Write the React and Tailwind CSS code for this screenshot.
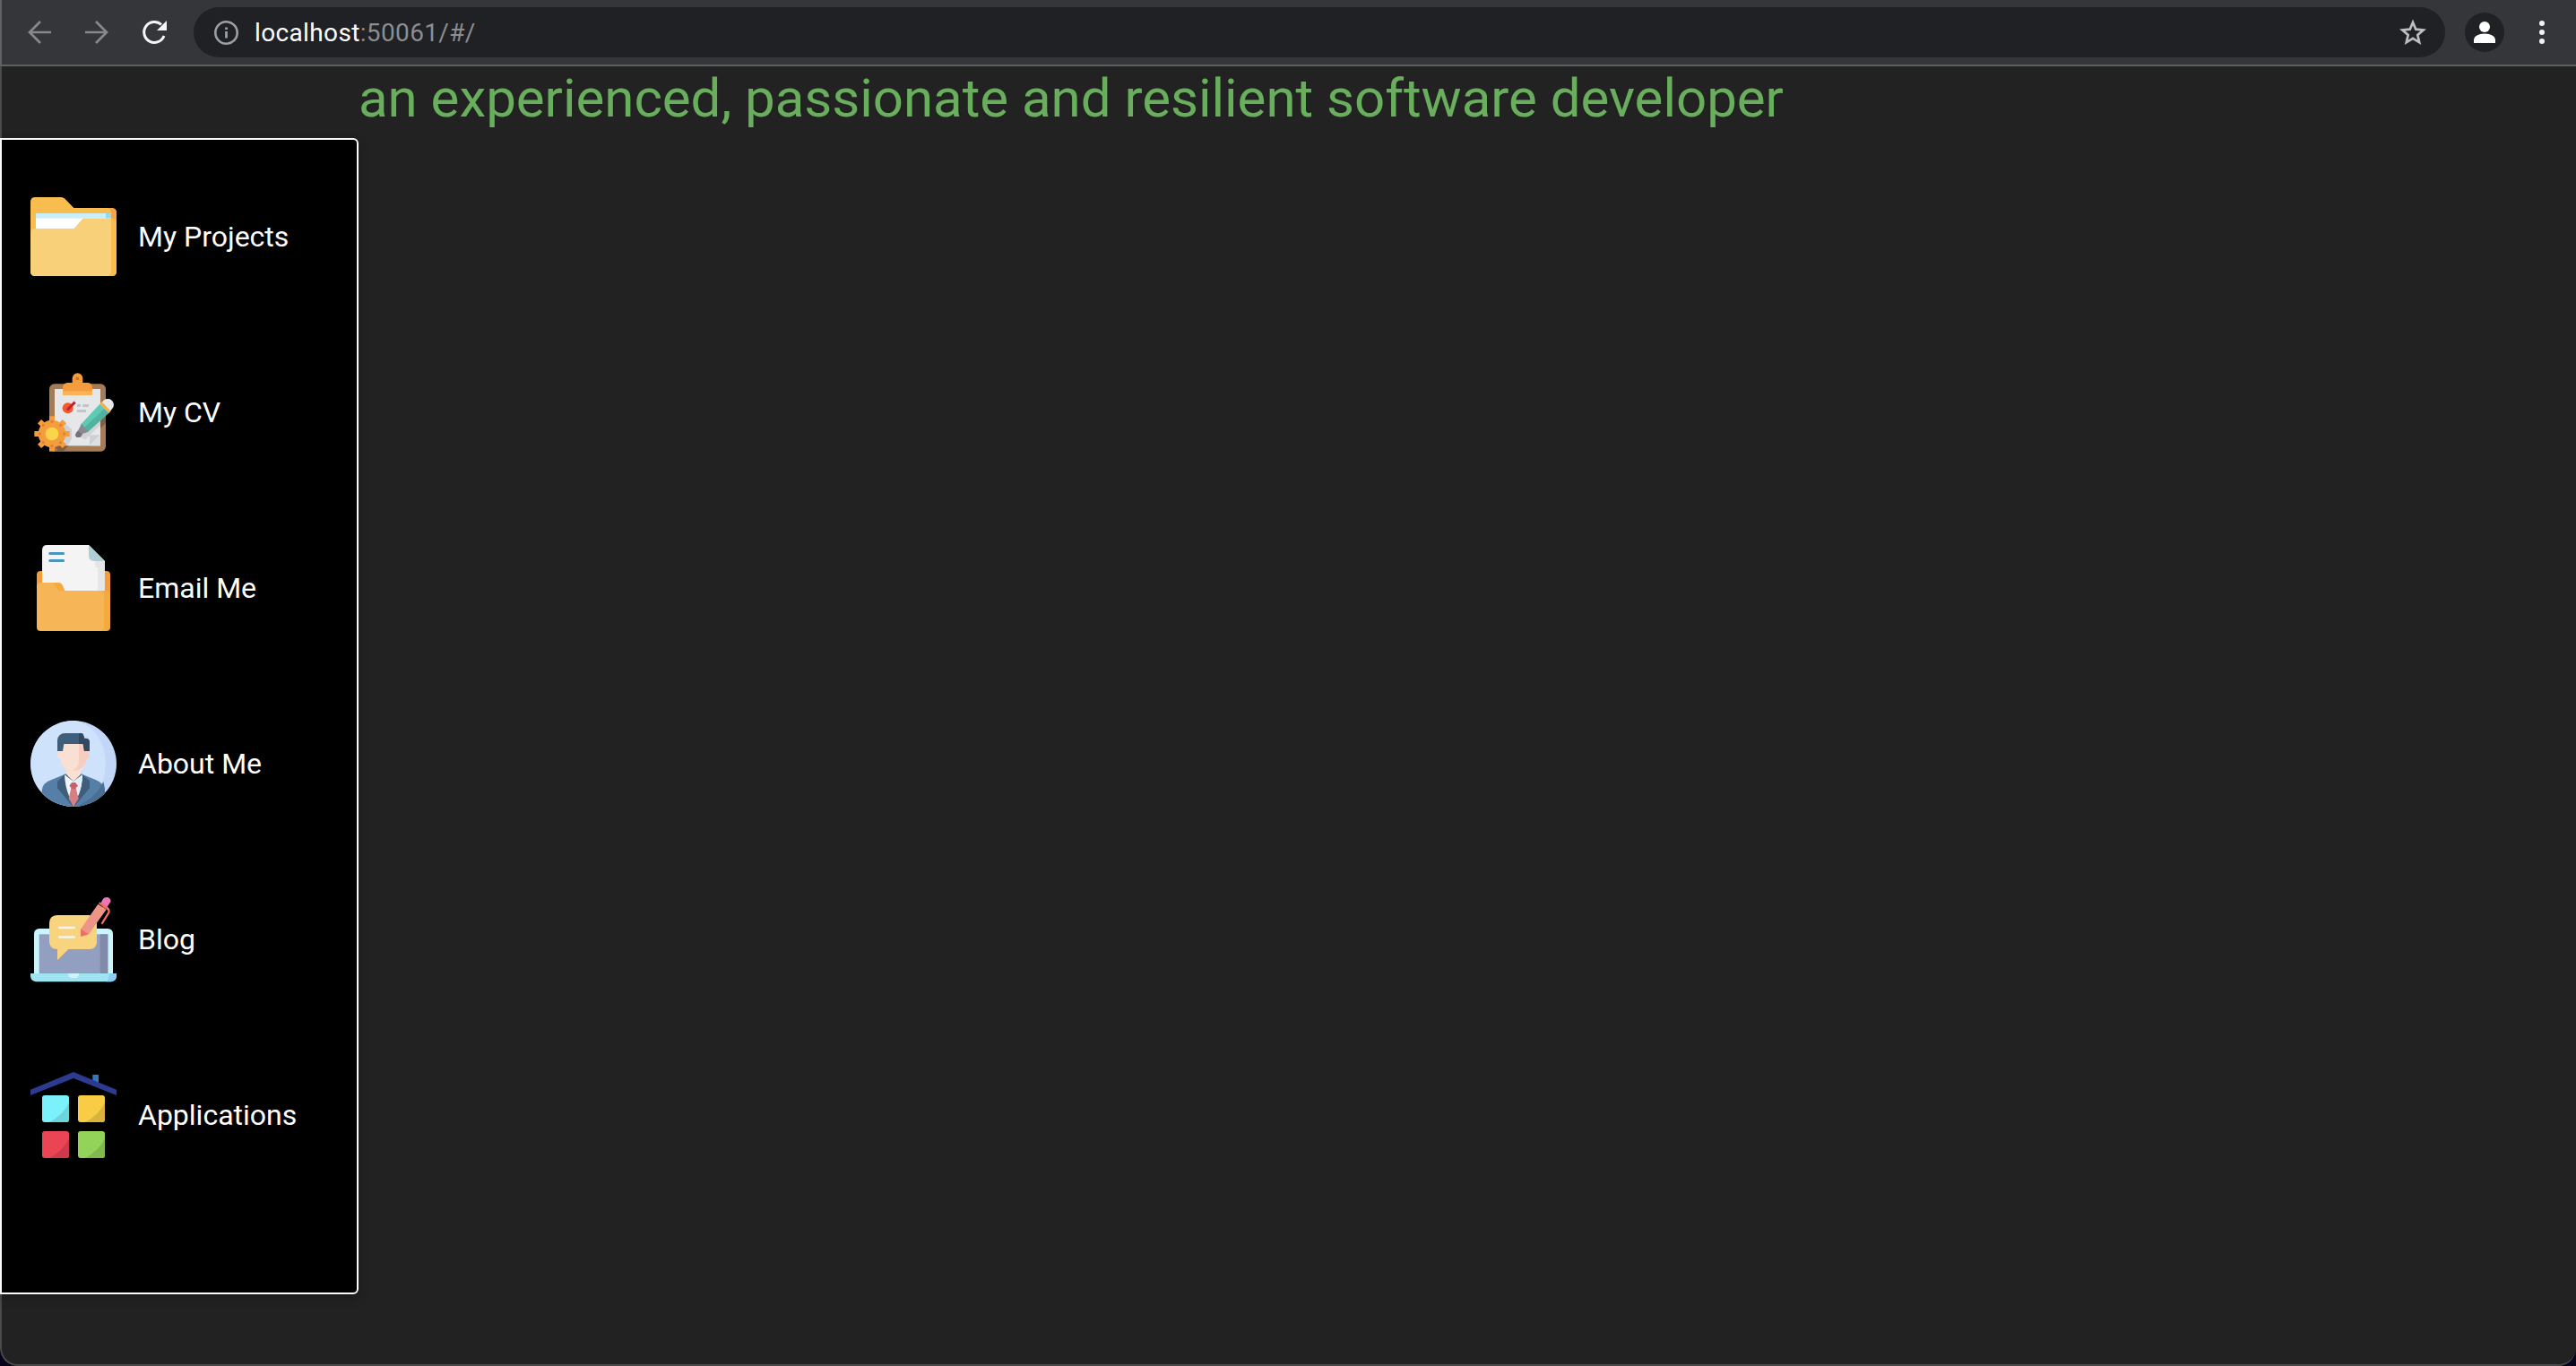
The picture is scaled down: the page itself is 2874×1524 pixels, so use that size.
import React from "react";

const FolderIcon = () => (
  <svg viewBox="42 48 288 288" className="size-24 shrink-0">
    <path d="M58 60H144Q152 60 158 66L187 96H314Q330 97 330 113V308Q330 324 314 324H58Q42 324 42 308V76Q42 60 58 60Z" fill="#f7bd4f" />
    <path d="M296 96H314Q330 97 330 113V140L312 132V112Q312 97 296 96Z" fill="#f6a34c" />
    <rect x="60" y="114" width="252" height="52" fill="#fff" />
    <rect x="60" y="114" width="234" height="17" fill="#c9effb" />
    <rect x="294" y="114" width="18" height="17" fill="#93dcf5" />
    <path d="M221 131H312V324H58Q42 324 42 308V181Q42 165 58 165H188L212 137Q216 131 221 131Z" fill="#f8d079" />
    <path d="M312 131Q330 131 330 147V308Q330 324 314 324H298Q312 323 312 308Z" fill="#f7bd4f" />
  </svg>
);

const CvIcon = () => (
  <svg viewBox="42 36 288 288" className="size-24 shrink-0">
    <rect x="105" y="85" width="189" height="226" rx="17" fill="#a47c58" />
    <rect x="123" y="102" width="153" height="190" fill="#e6e7e9" />
    <path d="M294 191V216L276 234V209Z" fill="#805f43" />
    <path d="M208 262L276 200V222L225 272Z" fill="#d2d3d6" />
    <path d="M240 256H274L240 291Z" fill="#cfd0d3" />
    <path d="M240 291L276 254V292H240Z" fill="#dedfe1" />
    <path d="M182 66A17 17 0 0 1 217 66V81H234Q249 83 249 98V122H150V98Q151 82 166 81H182Z" fill="#f59d3c" />
    <rect x="150" y="109" width="99" height="14" fill="#f8b35c" />
    <rect x="194" y="62" width="10" height="10" rx="2" fill="#c67628" />
    <path d="M198 153H210V162H198ZM217 153H237V162H217ZM198 171H228V180H198Z" fill="#c3c4c7" />
    <circle cx="167" cy="166" r="18" fill="#f1592f" />
    <path d="M168 169L188 149" stroke="#c5222e" strokeWidth="9" strokeLinecap="square" />
    <path d="M154 214L180 236V268L166 292H122V292H158Z" fill="#cfd0d3" />
    <path d="M120 292H170L153 309H135Z" fill="#805f43" />
    <g fill="#f59d3c">
      <circle cx="114" cy="252" r="46" />
      <rect x="105" y="193" width="18" height="118" />
      <rect x="55" y="243" width="118" height="18" />
      <rect x="105" y="193" width="18" height="118" transform="rotate(45 114 252)" />
      <rect x="105" y="193" width="18" height="118" transform="rotate(-45 114 252)" />
    </g>
    <g fill="#d98531">
      <circle cx="114" cy="211" r="5" /><circle cx="114" cy="293" r="5" />
      <circle cx="73" cy="252" r="5" /><circle cx="155" cy="252" r="5" />
      <circle cx="85" cy="223" r="5" /><circle cx="143" cy="223" r="5" />
      <circle cx="85" cy="281" r="5" /><circle cx="143" cy="281" r="5" />
    </g>
    <circle cx="114" cy="252" r="22" fill="#fbd44b" />
    <path d="M272 154L287 141A17 17 0 0 1 315 169L302 184Z" fill="#e6e7e9" />
    <path d="M282 143L274 152L304 184L312 174Z" fill="#f8ab49" />
    <path d="M287 140A18 18 0 0 1 313 168L309 174L283 147Z" fill="#e6e7e9" />
    <path d="M274 152L289 168L218 240L209 222Z" fill="#5fcbb5" />
    <path d="M289 168L304 183L233 247L218 235Z" fill="#4fb3a0" />
    <path d="M213 218L236 245L216 252L208 264H196L192 256L203 238Z" fill="#8c8991" />
    <path d="M200 242L216 254L210 262Q202 267 194 261Q190 252 200 242Z" fill="#74717a" />
  </svg>
);

const MailIcon = () => (
  <svg viewBox="42 54 288 288" className="size-24 shrink-0">
    <path d="M76 141H296Q309 141 309 154V230H63V154Q63 141 76 141Z" fill="#f59b38" />
    <path d="M98 54H237L291 108V220H81V71Q81 54 98 54Z" fill="#f4f4f4" />
    <path d="M258 108H291V210H267V129H258Z" fill="#e6e6e7" />
    <path d="M237 54L291 108H255Q237 107 237 91Z" fill="#aecfd6" />
    <path d="M107 82.500H152M107 106.500H152" stroke="#4c94c0" strokeWidth="9" strokeLinecap="round" />
    <path d="M110 180H138Q146 181 150 190L157 207H296Q309 207 309 220V329Q309 342 296 342H110Z" fill="#f4aa3f" />
    <path d="M76 180H114Q120 182 124 190Q132 207 140 207H275Q288 207 288 220V329Q288 342 275 342H76Q63 342 63 329V193Q63 180 76 180Z" fill="#f6b658" />
  </svg>
);

const PersonIcon = () => (
  <svg viewBox="42 42 288 288" className="size-24 shrink-0">
    <clipPath id="portrait"><circle cx="186" cy="186" r="144" /></clipPath>
    <g clipPath="url(#portrait)">
      <rect x="42" y="42" width="288" height="288" fill="#c2d7f8" />
      <ellipse cx="168" cy="186" rx="126" ry="147" fill="#cfe2fb" />
      <path d="M80 340V276Q82 250 112 240L158 221H214L260 240Q290 252 291 276V340Z" fill="#557fa6" />
      <path d="M286 246Q262 300 192 332H291V270Z" fill="#4a6f92" />
      <path d="M156 221L132 246V268L184 330H188L240 268V244L216 221Z" fill="#3f5e7b" />
      <path d="M156 223L186 246L216 223Q215 272 196 305L186 330L172 297Q157 260 156 223Z" fill="#f0f8fe" />
      <path d="M186 246L216 223Q215 262 202 292L186 280Z" fill="#e2effa" />
      <path d="M138 120H234V144Q240 146 240 156Q240 166 231 168Q227 195 210 209V222L186 246L162 222V207Q145 195 141 168Q132 166 132 156Q132 147 138 144Z" fill="#fadfd3" />
      <path d="M204 120H234V144Q240 146 240 156Q240 166 231 168Q225 209 183 210Q204 200 204 172Z" fill="#f6cdc1" />
      <path d="M132 144V108Q134 85 158 84H213Q220 86 222 101Q240 100 240 114V144H222L218 120H154L150 144Z" fill="#3f5e7b" />
      <path d="M204 84H213Q220 86 222 101Q240 100 240 114V144H222L218 120H204Z" fill="#2f4a61" />
      <path d="M178 267H194L203 303L186 330L170 303Z" fill="#d77f82" />
      <path d="M180 249H192L201 260L190 271H182L172 260Z" fill="#cb6066" />
    </g>
  </svg>
);

const BlogIcon = () => (
  <svg viewBox="42 30 288 288" className="size-24 shrink-0">
    <path d="M72 138H300Q318 139 318 156V290H54V156Q54 139 72 138Z" fill="#cbf5fd" />
    <rect x="71" y="157" width="230" height="132" fill="#939fc0" />
    <rect x="275" y="157" width="26" height="132" fill="#818ba9" />
    <path d="M42 288H330V298Q328 314 312 316H60Q44 314 42 298Z" fill="#9fe4f1" />
    <path d="M306 288H330V298Q328 314 312 316H296Q306 307 306 288Z" fill="#87cff7" />
    <path d="M168 288H204V292Q203 302 194 303H178Q169 302 168 292Z" fill="#cbf5fd" />
    <path d="M131 93H238Q264 94 264 119V182Q264 206 238 207H169L132 244V207Q106 206 105 182V119Q106 94 131 93Z" fill="#f9d47e" />
    <path d="M139 135H188M139 166.500H188" stroke="#f4f4f4" strokeWidth="8" strokeLinecap="round" />
    <path d="M288 65Q308 69 304 84L282 120" fill="none" stroke="#ee745f" strokeWidth="7" strokeLinecap="round" />
    <path d="M210 140L268 56L296 74L236 158L212 164Z" fill="#ee9587" />
    <path d="M210 139L235 157L210 165Z" fill="#ea7160" />
    <path d="M277 53L284 40Q291 31 302 34Q313 40 310 49L298 67Z" fill="#ec76b7" />
    <path d="M272 52L304 74" stroke="#ea7160" strokeWidth="7" />
  </svg>
);

const AppsIcon = () => (
  <svg viewBox="42 48 288 288" className="size-24 shrink-0">
    <rect x="250" y="57" width="20" height="28" fill="#3579bc" />
    <path d="M42 107L186 48L330 107V126L186 69L42 126Z" fill="#2c3b8f" />
    {[
      [81, 126, "#7bf2fb", "#6cd5dc"],
      [201, 126, "#f9cc45", "#dab33c"],
      [81, 246, "#eb4555", "#cd3b4a"],
      [201, 246, "#94d35a", "#81b94e"],
    ].map(([x, y, light, dark]) => (
      <g key={light} transform={`translate(${x} ${y})`}>
        <rect width="90" height="90" rx="9" fill={light} />
        <path d="M90 24V81Q90 90 81 90H24Q70 66 90 24Z" fill={dark} />
      </g>
    ))}
  </svg>
);

const items = [
  ["My Projects", FolderIcon],
  ["My CV", CvIcon],
  ["Email Me", MailIcon],
  ["About Me", PersonIcon],
  ["Blog", BlogIcon],
  ["Applications", AppsIcon],
];

function BrowserBar() {
  return (
    <header className="flex h-[74px] shrink-0 items-center border-b-2 border-l-2 border-[#5f6063] bg-[#35363a]">
      <svg className="ml-[26px] size-8" viewBox="0 0 32 32" fill="none" stroke="#87888a" strokeWidth="2.700">
        <path d="M29 16H5M17 4L5 16L17 28" />
      </svg>
      <svg className="ml-8 size-8" viewBox="0 0 32 32" fill="none" stroke="#87888a" strokeWidth="2.700">
        <path d="M3 16H27M15 4L27 16L15 28" />
      </svg>
      <svg className="ml-8 size-8" viewBox="0 0 32 32">
        <path d="M27 20A11.500 11.500 0 1 1 24 7.500" fill="none" stroke="#f4f5f6" strokeWidth="3" />
        <path d="M30 3V14H19Z" fill="#f4f5f6" />
      </svg>
      <div className="ml-7 flex h-14 w-[2512px] items-center rounded-full bg-[#202124] pr-[21px] pl-[22px]">
        <svg className="size-[29px]" viewBox="0 0 29 29" fill="none">
          <circle cx="14.500" cy="14.500" r="12.200" stroke="#9aa0a6" strokeWidth="2.600" />
          <path d="M14.500 13V20.500M14.500 8.500V11" stroke="#9aa0a6" strokeWidth="2.800" />
        </svg>
        <div className="ml-[17px] pt-0.5 text-[28px] leading-none tracking-[0.36px] text-[#8c8d90]">
          <span className="text-white">localhost</span>:50061/#/
        </div>
        <svg className="ml-auto size-[30px]" viewBox="0 0 30 30" fill="none" stroke="#bdbec0" strokeWidth="2.700">
          <path d="M15 4L18.300 11.700L26.700 12.500L20.300 18L22.200 26.300L15 21.900L7.800 26.300L9.700 18L3.300 12.500L11.700 11.700Z" />
        </svg>
      </div>
      <div className="ml-[22px] flex size-11 items-center justify-center rounded-full bg-[#202124]">
        <svg className="size-6" viewBox="0 0 24 24" fill="#fff">
          <circle cx="12" cy="6" r="6" />
          <path d="M0 24V20Q1 14 12 13.500Q23 14 24 20V24Z" />
        </svg>
      </div>
      <div className="ml-[39px] flex flex-col gap-1">
        <i className="size-1.5 rounded-full bg-[#f1f2f3]" />
        <i className="size-1.5 rounded-full bg-[#f1f2f3]" />
        <i className="size-1.5 rounded-full bg-[#f1f2f3]" />
      </div>
    </header>
  );
}

export default function App() {
  return (
    <div className="h-[1524px] w-[2874px] overflow-hidden bg-[#08041c] font-[Roboto,sans-serif]">
      <div className="flex h-[1524px] flex-col overflow-hidden rounded-b-[20px] bg-[#222222]">
        <BrowserBar />
        <main className="flex grow flex-col rounded-b-[20px] border-b-2 border-l-2 border-[#4b4a4b]">
          <h1 className="ml-[398px] h-20 text-[60px] leading-[72px] tracking-[-0.02px] whitespace-nowrap text-[#69ae5d]">
            an experienced, passionate and resilient software developer
          </h1>
          <nav className="-ml-0.5 flex h-[1290px] w-[400px] flex-col rounded-r-[6px] border-2 border-[#f8f9f8] bg-black pt-2.5 shadow-[0_4px_12px_rgba(0,0,0,0.25)]">
            {items.map(([label, Icon]) => (
              <a key={label} className="flex h-[196px] items-center gap-6 pl-8 text-[32px] leading-none text-white">
                <Icon />
                {label}
              </a>
            ))}
          </nav>
        </main>
      </div>
    </div>
  );
}
